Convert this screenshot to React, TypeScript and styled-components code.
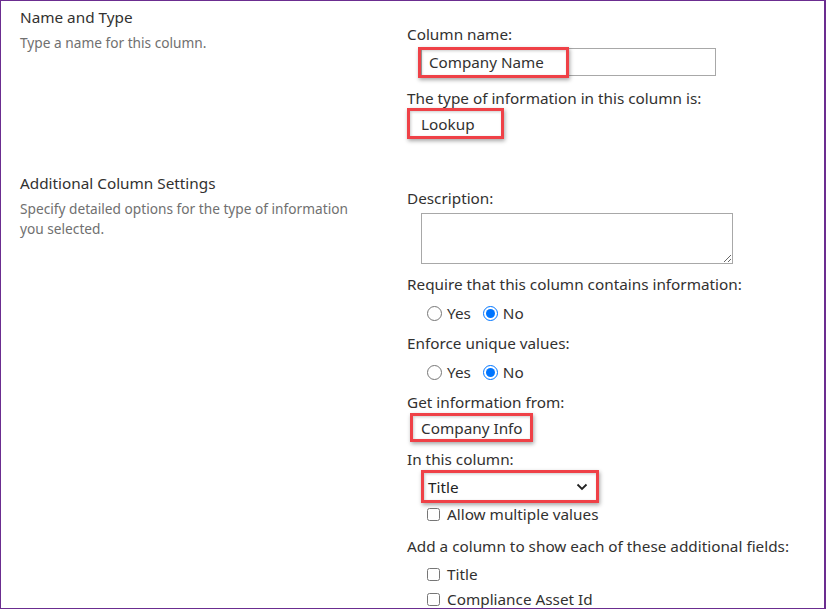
import React from "react";
import styled, { createGlobalStyle } from "styled-components";

const Global = createGlobalStyle`
  html, body { margin: 0; padding: 0; background: #fff; }
  body { font-family: "Noto Sans", "Open Sans", Arial, sans-serif; }
  * { box-sizing: border-box; }
`;

const Page = styled.div`
  width: 826px;
  height: 609px;
  border: 1px solid #6b2d90;
  border-right-width: 2px;
  overflow: hidden;
  background: #fff;
  color: #323130;
  font-size: 15.3px;
  line-height: 20px;
`;

const Section = styled.section<{ $top: number; $rightTop: number }>`
  display: grid;
  grid-template-columns: 401px 1fr;
  padding-top: ${(p) => p.$top}px;
  & > div:last-child {
    padding-top: ${(p) => p.$rightTop}px;
  }
`;

const LeftCol = styled.div`
  padding-left: 19px;
`;

const RightCol = styled.div`
  display: flex;
  flex-direction: column;
  align-items: flex-start;
  padding-left: 5px;
`;

const Heading = styled.div`
  font-size: 15.3px;
  line-height: 20px;
  color: #323130;
`;

const Desc = styled.div`
  margin-top: 6px;
  color: #707070;
  font-size: 13.7px;
  line-height: 20px;
  width: 345px;
`;

const Label = styled.div<{ $mt?: number }>`
  margin-top: ${(p) => p.$mt ?? 0}px;
  color: #323130;
  white-space: nowrap;
`;

const Field = styled.div<{ $mt?: number; $ml?: number }>`
  position: relative;
  margin-top: ${(p) => p.$mt ?? 0}px;
  margin-left: ${(p) => p.$ml ?? 0}px;
`;

const Highlight = styled.div<{ $l: number; $t: number; $w: number; $h: number }>`
  position: absolute;
  left: ${(p) => p.$l}px;
  top: ${(p) => p.$t}px;
  width: ${(p) => p.$w}px;
  height: ${(p) => p.$h}px;
  border: 3px solid #ef4147;
  box-shadow: 1px 2px 4px rgba(0, 0, 0, 0.35), inset 1px 1px 3px rgba(0, 0, 0, 0.2);
  pointer-events: none;
`;

const TextInput = styled.input`
  display: block;
  width: 295px;
  height: 28px;
  border: 1px solid #a8a8a8;
  padding: 0 0 0 7px;
  font: inherit;
  font-size: 15.2px;
  color: #323130;
  background: #fff;
  outline: none;
`;

const StaticValue = styled.div<{ $w: number; $h: number; $pl: number }>`
  width: ${(p) => p.$w}px;
  height: ${(p) => p.$h}px;
  padding-left: ${(p) => p.$pl}px;
  display: flex;
  align-items: center;
  font-size: 15.3px;
  color: #323130;
`;

const TextArea = styled.textarea`
  display: block;
  width: 312px;
  height: 51px;
  border: 1px solid #a8a8a8;
  font: inherit;
  resize: both;
  outline: none;
`;

const OptionRow = styled.div<{ $mt?: number }>`
  display: flex;
  align-items: center;
  margin-top: ${(p) => p.$mt ?? 0}px;
  margin-left: 20px;
  height: 20px;
`;

const OptionLabel = styled.label`
  display: flex;
  align-items: center;
  margin-right: 12px;
  font-size: 15.3px;
  color: #323130;
  white-space: nowrap;
`;

const Radio = styled.input`
  width: 15px;
  height: 15px;
  margin: 0 5px 0 0;
`;

const Check = styled.input`
  width: 13px;
  height: 13px;
  margin: 0 7px 0 0;
`;

const SelectBox = styled.div`
  width: 174px;
  height: 29px;
  border: 1px solid #8a8a8a;
  display: flex;
  align-items: center;
  justify-content: space-between;
  padding: 0 8px 0 4px;
  font-size: 15.3px;
  color: #222;
  background: #fff;
`;

export default function App() {
  return (
    <>
      <Global />
      <Page>
        <Section $top={6} $rightTop={17}>
          <LeftCol>
            <Heading>Name and Type</Heading>
            <Desc>Type a name for this column.</Desc>
          </LeftCol>
          <RightCol>
            <Label>Column name:</Label>
            <Field $mt={4} $ml={14}>
              <TextInput readOnly value="Company Name" />
              <Highlight $l={-3} $t={-1} $w={151} $h={31} />
            </Field>
            <Label $mt={12}>The type of information in this column is:</Label>
            <Field>
              <StaticValue $w={97} $h={31} $pl={14}>Lookup</StaticValue>
              <Highlight $l={0} $t={0} $w={97} $h={31} />
            </Field>
          </RightCol>
        </Section>
        <Section $top={34} $rightTop={15}>
          <LeftCol>
            <Heading>Additional Column Settings</Heading>
            <Desc>Specify detailed options for the type of information you selected.</Desc>
          </LeftCol>
          <RightCol>
            <Label>Description:</Label>
            <Field $mt={5} $ml={14}>
              <TextArea />
            </Field>
            <Label $mt={10}>Require that this column contains information:</Label>
            <OptionRow $mt={9}>
              <OptionLabel>
                <Radio type="radio" name="req" readOnly />
                Yes
              </OptionLabel>
              <OptionLabel>
                <Radio type="radio" name="req" checked readOnly />
                No
              </OptionLabel>
            </OptionRow>
            <Label $mt={10}>Enforce unique values:</Label>
            <OptionRow $mt={9}>
              <OptionLabel>
                <Radio type="radio" name="uniq" readOnly />
                Yes
              </OptionLabel>
              <OptionLabel>
                <Radio type="radio" name="uniq" checked readOnly />
                No
              </OptionLabel>
            </OptionRow>
            <Label $mt={10}>Get information from:</Label>
            <Field $mt={1} $ml={3}>
              <StaticValue $w={123} $h={29} $pl={11}>Company Info</StaticValue>
              <Highlight $l={0} $t={0} $w={123} $h={29} />
            </Field>
            <Label $mt={7}>In this column:</Label>
            <Field $mt={3} $ml={16}>
              <SelectBox>
                <span>Title</span>
                <svg width="12" height="8" viewBox="0 0 12 8">
                  <path d="M1.5 1.5 L6 6 L10.5 1.5" fill="none" stroke="#222" strokeWidth="1.8" />
                </svg>
              </SelectBox>
              <Highlight $l={-2} $t={-2} $w={178} $h={33} />
            </Field>
            <OptionRow $mt={3}>
              <OptionLabel>
                <Check type="checkbox" readOnly />
                Allow multiple values
              </OptionLabel>
            </OptionRow>
            <Label $mt={12}>Add a column to show each of these additional fields:</Label>
            <OptionRow $mt={8}>
              <OptionLabel>
                <Check type="checkbox" readOnly />
                Title
              </OptionLabel>
            </OptionRow>
            <OptionRow $mt={5}>
              <OptionLabel>
                <Check type="checkbox" readOnly />
                Compliance Asset Id
              </OptionLabel>
            </OptionRow>
          </RightCol>
        </Section>
      </Page>
    </>
  );
}
